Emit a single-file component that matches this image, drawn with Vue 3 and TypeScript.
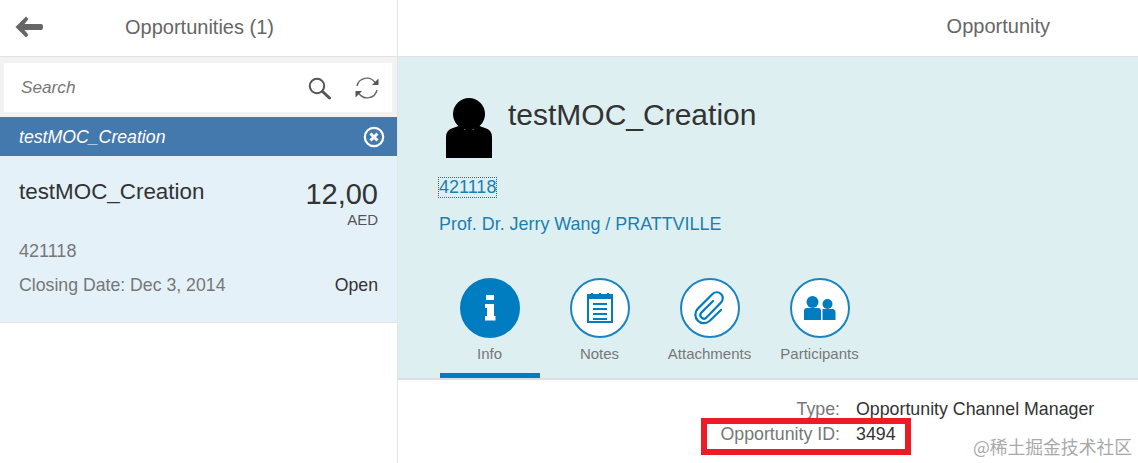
<script setup lang="ts">
const tabs = [
  { label: 'Info', icon: 'info', active: true },
  { label: 'Notes', icon: 'notes', active: false },
  { label: 'Attachments', icon: 'clip', active: false },
  { label: 'Participants', icon: 'people', active: false },
];
</script>

<template>
  <div class="app">
    <aside class="master">
      <header class="master-head">
        <svg class="back" viewBox="0 0 28 22" width="28" height="22">
          <path d="M11 0.5 L13.5 3 L9.5 8 H26 Q28 8 28 11 Q28 14 26 14 H9.5 L13.5 19 L11 21.5 L0.5 11 Z" fill="#666" />
        </svg>
        <span class="master-title">Opportunities (1)</span>
      </header>
      <div class="search-band">
        <div class="search">
          <span class="search-text">Search</span>
          <svg class="search-icon" viewBox="0 0 24 24" width="24" height="24" fill="none" stroke="#555">
            <circle cx="10" cy="10" r="7.2" stroke-width="2" />
            <path d="M15.5 15.5 L22.5 22" stroke-width="3" stroke-linecap="round" />
          </svg>
          <svg class="refresh-icon" viewBox="0 0 26 26" width="26" height="26" fill="none" stroke="#666" stroke-width="1.4">
            <path d="M3 11 A10 10 0 0 1 21 7.5" />
            <path d="M23 15 A10 10 0 0 1 5 18.5" />
            <path d="M24.5 3.500 V10 H18 Z" fill="#555" stroke="none" />
            <path d="M1.500 22.500 V16 H8 Z" fill="#555" stroke="none" />
          </svg>
        </div>
      </div>
      <div class="filter-bar">
        <span>testMOC_Creation</span>
        <svg viewBox="0 0 22 22" width="22" height="22">
          <circle cx="11" cy="11" r="9.2" fill="none" stroke="#fff" stroke-width="2.2" />
          <path d="M7.5 7.5 L14.5 14.5 M14.5 7.5 L7.5 14.5" stroke="#fff" stroke-width="3" />
        </svg>
      </div>
      <div class="item">
        <div class="item-row first">
          <span class="item-name">testMOC_Creation</span>
          <span class="item-amount">12,00</span>
        </div>
        <div class="item-currency">AED</div>
        <div class="item-id">421118</div>
        <div class="item-row last">
          <span class="item-date">Closing Date: Dec 3, 2014</span>
          <span class="item-status">Open</span>
        </div>
      </div>
    </aside>

    <main class="detail">
      <header class="detail-head">Opportunity</header>
      <section class="hero">
        <div class="hero-top">
          <svg class="avatar" viewBox="0 0 46 62" width="46" height="62">
            <circle cx="23" cy="17" r="16" fill="#000" />
            <path d="M0 61 V40 Q0 33 7 31 L14 28.500 L19 33 L23 30 L27 33 L32 28.500 L39 31 Q46 33 46 40 V61 Z" fill="#000" />
          </svg>
          <h1 class="hero-title">testMOC_Creation</h1>
        </div>
        <a class="hero-id">421118</a>
        <a class="hero-contact">Prof. Dr. Jerry Wang / PRATTVILLE</a>
        <nav class="tabs">
          <div v-for="tab in tabs" :key="tab.label" class="tab" :class="{ active: tab.active }">
            <div class="tab-circle">
              <svg v-if="tab.icon === 'info'" viewBox="0 0 60 60" width="60" height="60">
                <path d="M26 17 H34 V22 H26 Z M25 26 H34 V38 H35.500 V42.500 H25 V38 H27 V30 H25 Z" fill="#fff" />
              </svg>
              <svg v-else-if="tab.icon === 'notes'" viewBox="0 0 60 60" width="60" height="60" fill="none" stroke="#007cc0">
                <rect x="18" y="17" width="24" height="27" stroke-width="2" />
                <path d="M18 17 H42 V21 H18 Z" fill="#007cc0" stroke="none" />
                <path d="M22 15 V18 M30 15 V18 M38 15 V18" stroke-width="2" />
                <path d="M23 26 H37 M23 31 H37 M23 36 H37 M23 41 H37" stroke-width="1.800" />
              </svg>
              <svg v-else-if="tab.icon === 'clip'" viewBox="0 0 60 60" width="60" height="60" fill="none" stroke="#007cc0" stroke-width="2.200" stroke-linecap="round">
                <path d="M33 23 L21 35 A3.600 3.600 0 0 0 26 40 L41 24.500 A6 6 0 0 0 32.500 16 L17.500 31 A8.500 8.500 0 0 0 29.500 43 L41 32" />
              </svg>
              <svg v-else viewBox="0 0 60 60" width="60" height="60" fill="#007cc0">
                <circle cx="22.500" cy="24" r="6" />
                <path d="M14 42 V33 Q14 30 17 30 H28 Q31 30 31 33 V42 Z" />
                <circle cx="37.500" cy="26" r="5" />
                <path d="M32.500 42 V31 H42 Q45.500 31 45.500 34 V42 Z" />
              </svg>
            </div>
            <span class="tab-label">{{ tab.label }}</span>
          </div>
        </nav>
      </section>
      <section class="facts">
        <div class="fact">
          <span class="fact-label">Type:</span>
          <span class="fact-value">Opportunity Channel Manager</span>
        </div>
        <div class="fact">
          <span class="fact-label">Opportunity ID:</span>
          <span class="fact-value">3494</span>
        </div>
      </section>
    </main>

    <div class="highlight"></div>
    <div class="watermark">@稀土掘金技术社区</div>
  </div>
</template>

<style>
html, body {
  margin: 0;
  background: #fff;
}
</style>

<style scoped>
.app {
  position: relative;
  display: flex;
  width: 1138px;
  height: 463px;
  overflow: hidden;
  font-family: "Liberation Sans", Arial, sans-serif;
  background: #fff;
}

.master {
  width: 397px;
  flex: none;
  border-right: 1px solid #e4e4e4;
}

.master-head {
  display: flex;
  align-items: center;
  height: 54px;
  padding: 0 0 2px 15px;
  border-bottom: 1px solid #e2e2e2;
}

.back {
  flex: none;
}

.master-title {
  margin-left: 82px;
  font-size: 20px;
  color: #666;
}

.search-band {
  height: 60px;
  padding: 6px 5px 5px 4px;
  box-sizing: border-box;
  background: #f2f2f2;
}

.search {
  display: flex;
  align-items: center;
  height: 49px;
  background: #fff;
  padding: 0 12px 0 17px;
}

.search-text {
  flex: 1;
  font-size: 17.200px;
  font-style: italic;
  color: #777;
}

.search-icon {
  margin-right: 23px;
}

.filter-bar {
  display: flex;
  align-items: center;
  justify-content: space-between;
  height: 39px;
  padding: 0 12px 0 19px;
  background: #4479ad;
  color: #fff;
  font-size: 17.700px;
  font-style: italic;
}

.filter-bar span {
  position: relative;
  top: 1px;
}

.item {
  height: 167px;
  box-sizing: border-box;
  padding: 23px 19px 0;
  background: #e4f1f9;
  border-bottom: 1px solid #e2e6e8;
}

.item-row {
  display: flex;
  justify-content: space-between;
}

.item-row.first {
  align-items: flex-start;
  height: 32px;
}

.item-name {
  font-size: 22.400px;
  color: #333;
}

.item-amount {
  font-size: 29px;
  line-height: 30px;
  color: #333;
}

.item-currency {
  text-align: right;
  font-size: 15px;
  line-height: 17px;
  color: #555;
}

.item-id {
  margin-top: 13px;
  font-size: 18px;
  line-height: 21px;
  color: #777;
}

.item-row.last {
  margin-top: 13px;
  font-size: 17.700px;
  line-height: 21px;
}

.item-date {
  color: #777;
}

.item-status {
  color: #333;
}

.detail {
  flex: 1;
  min-width: 0;
}

.detail-head {
  height: 56px;
  border-bottom: 1px solid #e2e2e2;
  padding-right: 88px;
  text-align: right;
  line-height: 53px;
  font-size: 20px;
  color: #666;
}

.hero {
  height: 323px;
  box-sizing: border-box;
  padding: 24px 0 0 41px;
  background: #deeff2;
  border-bottom: 2px solid #d9e1e4;
}

.hero-top {
  display: flex;
  height: 94px;
}

.avatar {
  margin: 16px 0 0 7px;
  flex: none;
}

.hero-title {
  margin: 17px 0 0 16px;
  font-size: 30px;
  line-height: 34px;
  font-weight: 400;
  color: #333;
}

.hero-id {
  display: block;
  width: fit-content;
  margin-top: 3px;
  outline: 1px dotted #1f6f99;
  font-size: 18px;
  line-height: 19px;
  color: #1b7fb0;
}

.hero-contact {
  display: block;
  margin-top: 17px;
  font-size: 17.900px;
  line-height: 20px;
  color: #1b7fb0;
}

.tabs {
  display: flex;
  margin: 44px 0 0 1px;
}

.tab {
  position: relative;
  width: 110px;
  height: 100px;
  display: flex;
  flex-direction: column;
  align-items: center;
}

.tab.active::after {
  content: "";
  position: absolute;
  left: 0;
  right: 10px;
  bottom: 0;
  height: 5px;
  background: #007cc0;
}

.tab-circle {
  width: 60px;
  height: 60px;
  box-sizing: border-box;
  border-radius: 50%;
  border: 2px solid #1b84c0;
  background: #fff;
  display: flex;
  align-items: center;
  justify-content: center;
  margin-right: 10px;
  margin-left: -1px;
}

.tab-circle svg {
  flex: none;
}

.tab.active .tab-circle {
  background: #007cc0;
  border-color: #007cc0;
}

.tab-label {
  margin: 7px 11px 0 0;
  font-size: 15px;
  color: #777;
  white-space: nowrap;
}

.facts {
  margin-top: 19px;
  display: grid;
  grid-template-columns: 442px auto;
  column-gap: 16px;
  row-gap: 5px;
  font-size: 17.800px;
  line-height: 20px;
}

.fact {
  display: contents;
}

.fact-label {
  text-align: right;
  color: #777;
}

.fact-value {
  color: #333;
}

.highlight {
  position: absolute;
  left: 701px;
  top: 418px;
  width: 210px;
  height: 37px;
  box-sizing: border-box;
  border: 6px solid #ed1c24;
}

.watermark {
  position: absolute;
  right: 6px;
  top: 434px;
  font-family: "Noto Sans CJK SC", sans-serif;
  font-size: 17.800px;
  line-height: 24px;
  color: #a9a9a9;
}
</style>
